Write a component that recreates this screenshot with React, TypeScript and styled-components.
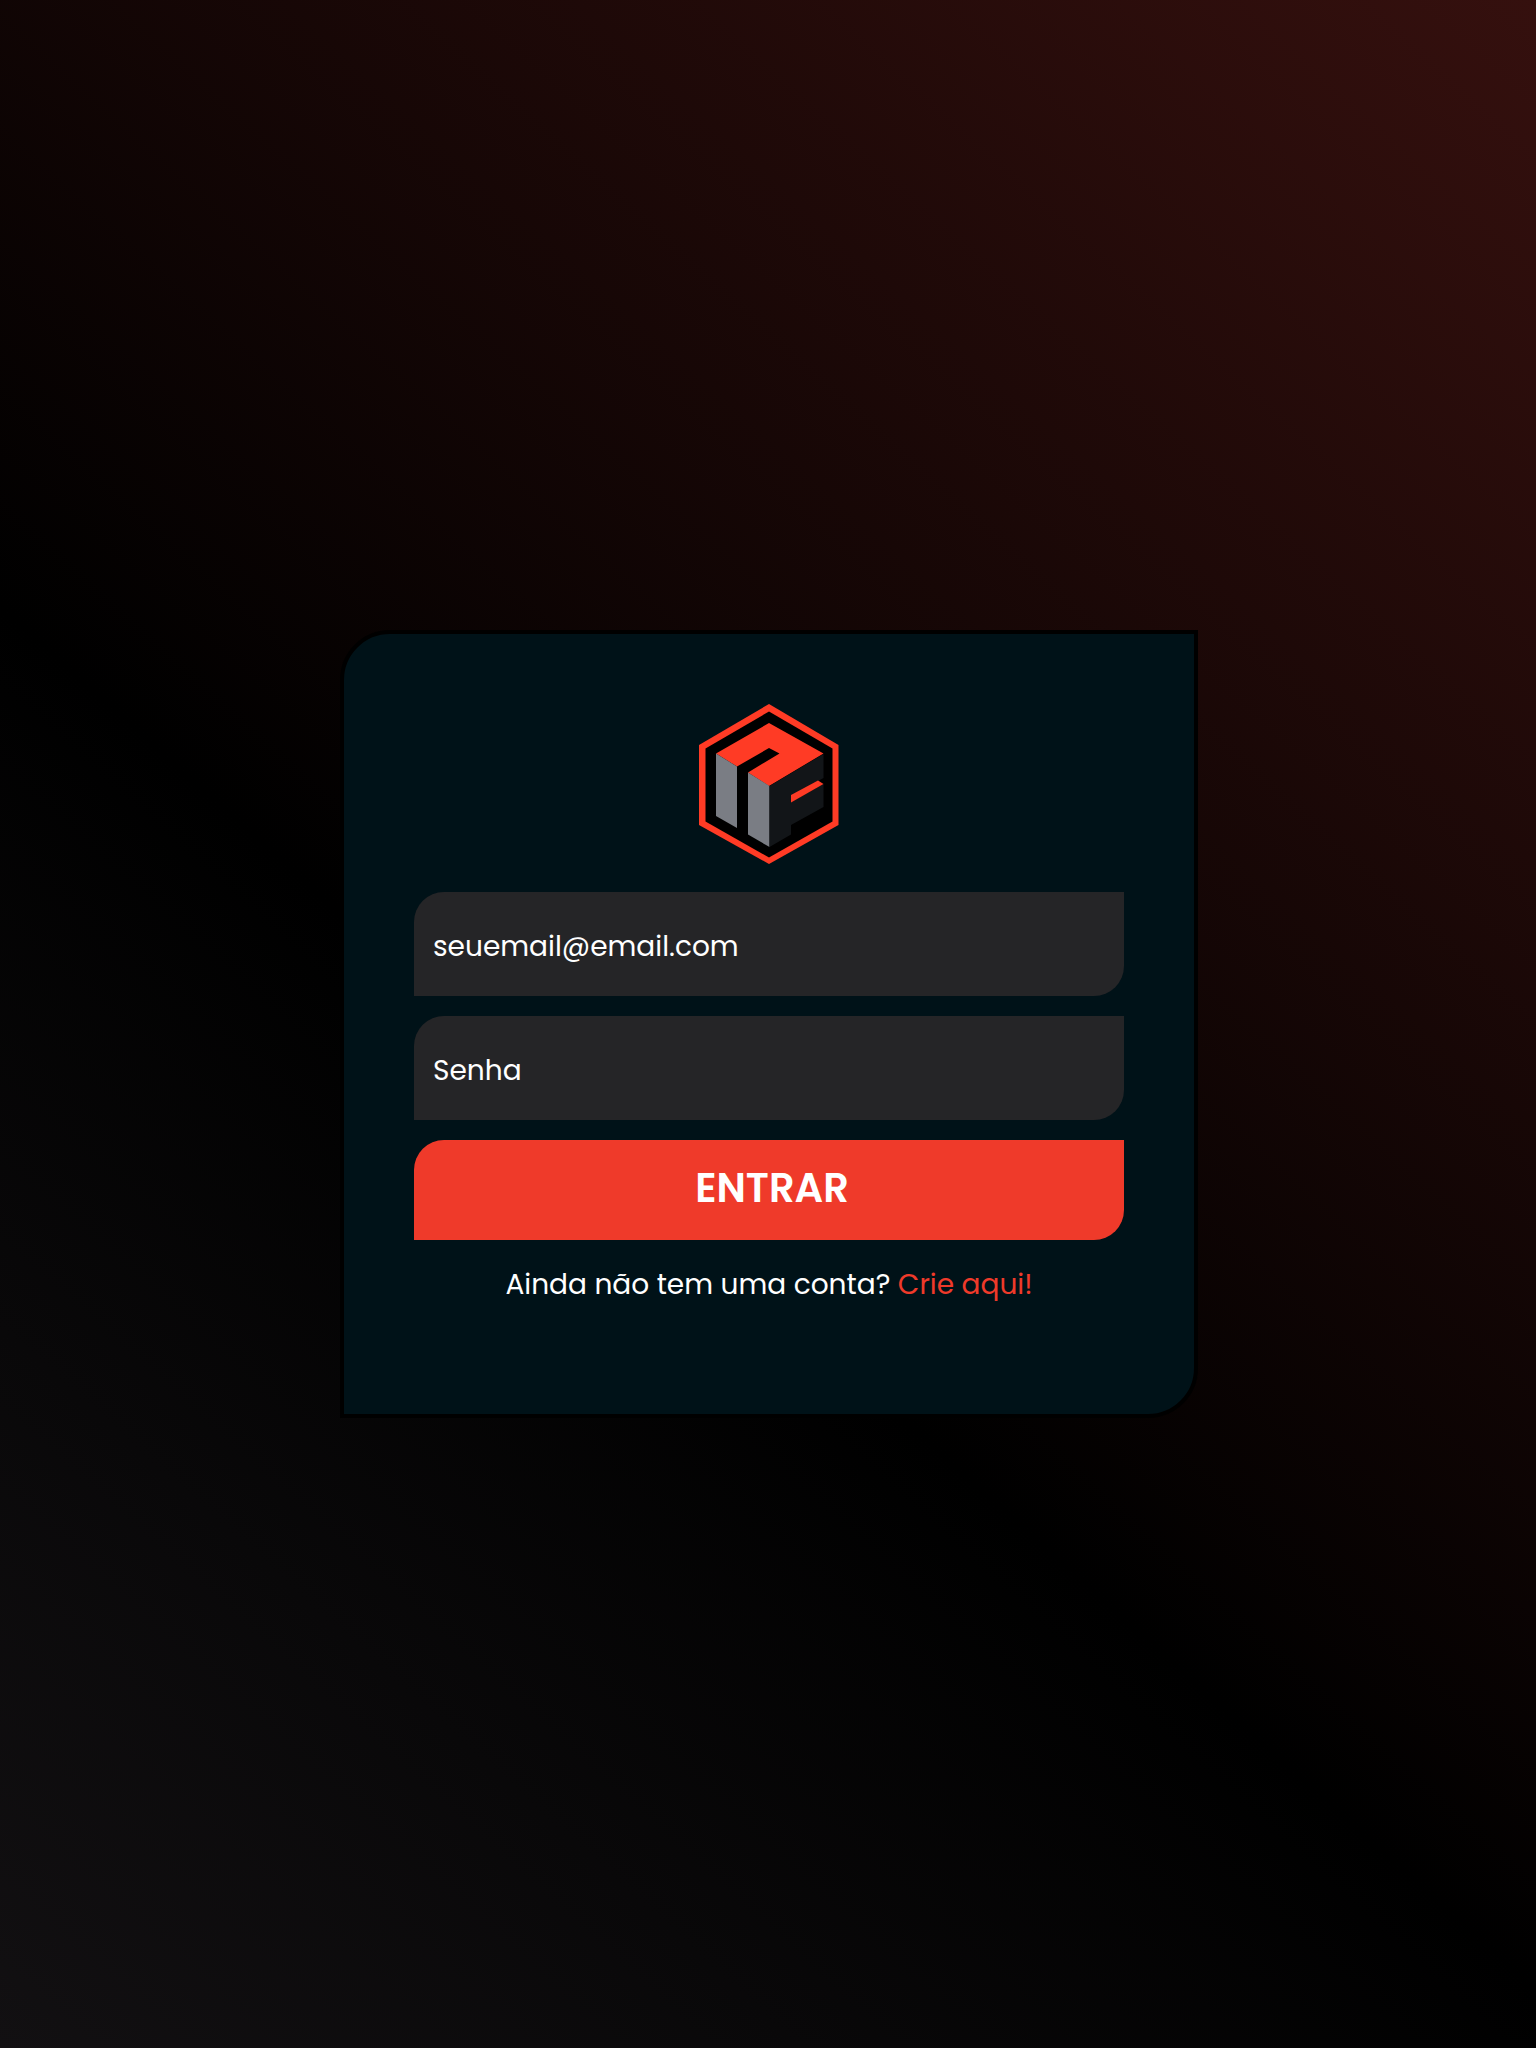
import React from "react";
import styled, { createGlobalStyle } from "styled-components";

const GlobalStyle = createGlobalStyle`
  * { box-sizing: border-box; }
  body {
    margin: 0;
    background: #000;
    font-family: Poppins, Inter, "Open Sans", sans-serif;
    color: #fff;
  }
`;

const Page = styled.main`
  min-height: 100vh;
  display: flex;
  align-items: center;
  justify-content: center;
  padding-left: 2px;
  background: linear-gradient(42deg, #121012 0%, #000 42%, #35100e 100%);
`;

const Card = styled.form`
  width: 100%;
  max-width: 858px;
  display: flex;
  flex-direction: column;
  align-items: center;
  gap: 20px;
  padding: 70px 70px 104px;
  background: #001218;
  border: 4px solid #000;
  border-radius: 50px 0 50px 0;
`;

const Logo = styled.svg`
  display: block;
  width: 140px;
  height: 160px;
  margin-bottom: 8px;
`;

const Field = styled.input`
  width: 100%;
  height: 104px;
  padding: 6px 19px 0;
  border: 0;
  border-radius: 30px 0 30px 0;
  background: #252527;
  color: #fff;
  font-family: inherit;
  font-size: 28px;

  &::placeholder {
    color: #fff;
    opacity: 1;
  }
`;

const Submit = styled.button`
  width: 100%;
  height: 100px;
  padding: 0 0 4px 6px;
  border: 0;
  border-radius: 30px 0 30px 0;
  background: #ef3a2a;
  color: #fff;
  font-family: inherit;
  font-size: 40px;
  font-weight: 600;
  cursor: pointer;
`;

const Hint = styled.p`
  margin: 0;
  font-size: 28px;
  line-height: 50px;
`;

const SignUp = styled.a`
  color: #ef3a2a;
  text-decoration: none;
`;

export default function App() {
  return (
    <>
      <GlobalStyle />
      <Page>
        <Card onSubmit={(e) => e.preventDefault()}>
          <Logo viewBox="698 704 140 160" role="img" aria-label="NF">
            <path d="M768 704 837.500 745V825L768 864 698 825V745Z" fill="#ff3b25" />
            <path d="M768 711.500 831.500 748.500V821.500L768 857.500 704.500 821.500V748.500Z" fill="#000" />
            <path d="M768 723 822.500 753.500 768 786 747 772.500 778.500 753.500 768 748 736 766.500 715 753.500Z" fill="#ff3b25" />
            <path d="M715 753.500 736 766.500V828L715 816Z" fill="#7a7d84" />
            <path d="M747 772.500 768.500 786V847L747 834.500Z" fill="#7a7d84" />
            <path d="M768.500 786 822.500 754V778L790 796V802L822.500 784V807L790 825V834.500L768.500 847Z" fill="#121518" />
            <path d="M790 795 817 780.500 822.500 784 790 802.500Z" fill="#ff3b25" />
          </Logo>
          <Field type="email" placeholder="seuemail@email.com" aria-label="Email" />
          <Field type="password" placeholder="Senha" aria-label="Senha" />
          <Submit type="submit">ENTRAR</Submit>
          <Hint>
            Ainda não tem uma conta? <SignUp href="#">Crie aqui!</SignUp>
          </Hint>
        </Card>
      </Page>
    </>
  );
}
